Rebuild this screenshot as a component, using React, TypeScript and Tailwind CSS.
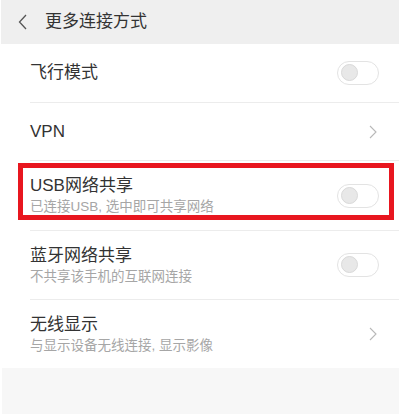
import React from "react";

const Toggle = () => (
  <div className="relative w-[42px] h-[24px] rounded-full border-[1.5px] border-[#e3e3e3] bg-white">
    <div className="absolute left-[2.5px] top-[2px] w-[17px] h-[17px] rounded-full bg-[#e8e8e8] border border-[#d9d9d9]" />
  </div>
);

const Chevron = () => (
  <svg width="8" height="14" viewBox="0 0 8 14" fill="none">
    <path d="M1 1 L7 7 L1 13" stroke="#b8b8b8" strokeWidth="1.1" />
  </svg>
);

type RowProps = {
  title: string;
  sub?: string;
  right: "toggle" | "chevron";
  h: string;
  last?: boolean;
};

const Row = ({ title, sub, right, h, last }: RowProps) => (
  <div className="pl-[30px]">
    <div
      className={`flex items-center justify-between ${h} ${
        last ? "" : "border-b border-[#ececec]"
      } mr-[3px]`}
    >
      <div className="flex flex-col">
        <div className="text-[17px] leading-[22px] text-[#333333]">{title}</div>
        {sub && (
          <div className="text-[13.5px] leading-[18px] text-[#a6a6a6] mt-[1px]">{sub}</div>
        )}
      </div>
      <div className="w-[42px] mr-[20px] flex justify-end">
        {right === "toggle" ? (
          <Toggle />
        ) : (
          <div className="mr-[2px]">
            <Chevron />
          </div>
        )}
      </div>
    </div>
  </div>
);

export default function App() {
  return (
    <div
      className="relative w-[402px] h-[414px] bg-white overflow-hidden"
      style={{ fontFamily: '"Liberation Sans", "Noto Sans CJK SC", sans-serif' }}
    >
      <div className="h-[44px] bg-[#efefef] mr-[3px] ml-[1px] flex items-center">
        <div className="ml-[17px] w-[10px] flex items-center">
          <svg width="9" height="16" viewBox="0 0 9 16" fill="none">
            <path d="M8 1 L1.5 8 L8 15" stroke="#555555" strokeWidth="1.3" />
          </svg>
        </div>
        <div className="ml-[17px] text-[17px] text-[#333333] leading-[22px]">更多连接方式</div>
      </div>
      <Row title="飞行模式" right="toggle" h="h-[59px]" />
      <Row title="VPN" right="chevron" h="h-[58px]" />
      <Row title="USB网络共享" sub="已连接USB, 选中即可共享网络" right="toggle" h="h-[70px]" />
      <Row title="蓝牙网络共享" sub="不共享该手机的互联网连接" right="toggle" h="h-[69px]" />
      <Row title="无线显示" sub="与显示设备无线连接, 显示影像" right="chevron" h="h-[68px]" last />
      <div className="h-[46px] bg-[#f7f7f7] ml-[2px] mr-[3px]" />
      <div className="absolute left-[18px] top-[163px] w-[376px] h-[57px] border-[5px] border-[#e8161f]" />
    </div>
  );
}
